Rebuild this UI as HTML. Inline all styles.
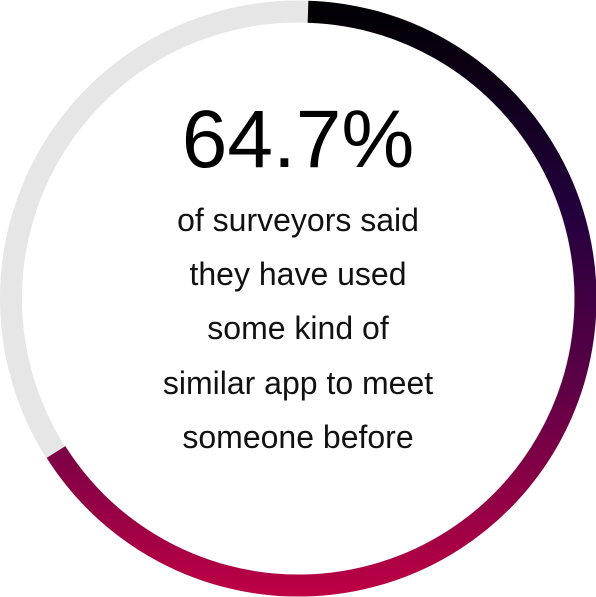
<!DOCTYPE html>
<html><head><meta charset="utf-8">
<style>
html,body{margin:0;padding:0;background:#fff;width:596px;height:597px;overflow:hidden}
svg{position:absolute;left:0;top:0}
.t{position:absolute;left:0;width:596px;text-align:center;font-family:"Liberation Sans",sans-serif;color:#111}
.big{top:90px;font-size:82px;line-height:100px;color:#000}
.txt{top:193px;font-size:32px;line-height:54.2px}
</style></head><body>
<svg width="596" height="597" viewBox="0 0 596 597">
<defs>
<linearGradient id="g" gradientUnits="userSpaceOnUse" x1="0" y1="0" x2="0" y2="597">
<stop offset="0" stop-color="#000"/>
<stop offset="0.35" stop-color="#22003c"/>
<stop offset="0.65" stop-color="#5e0046"/>
<stop offset="1" stop-color="#bf0044"/>
</linearGradient>
</defs>
<circle cx="298" cy="298.5" r="287" fill="none" stroke="#e6e6e6" stroke-width="22"/>
<path d="M308 11.7 A287 287 0 1 1 56 452" fill="none" stroke="url(#g)" stroke-width="22"/>
</svg>
<div class="t big">64.7%</div>
<div class="t txt">of surveyors said<br>they have used<br>some kind of<br>similar app to meet<br>someone before</div>
</body></html>
